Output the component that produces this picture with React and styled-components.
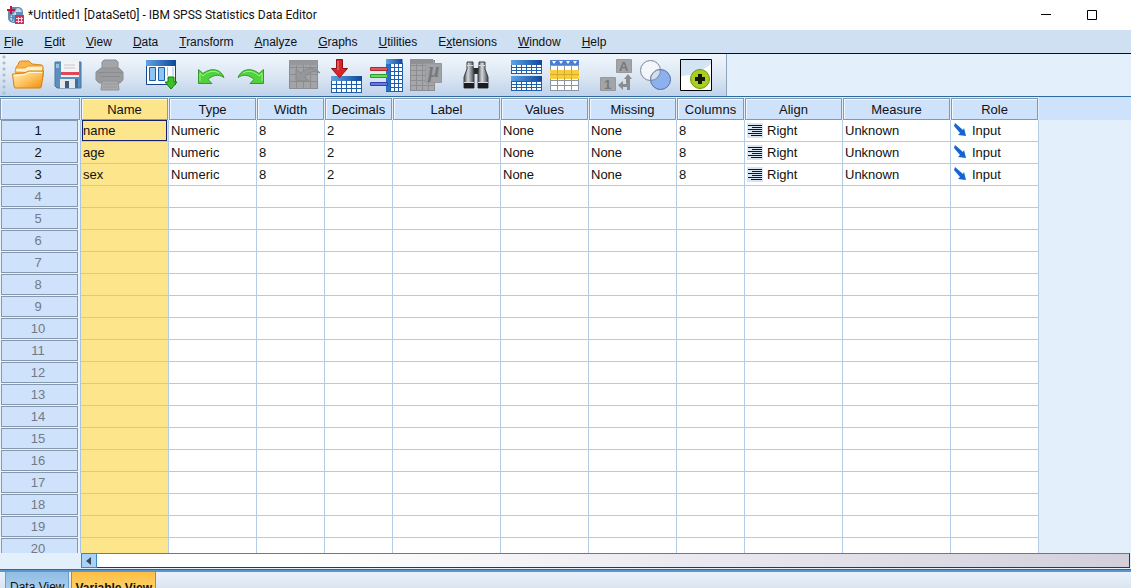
import React from 'react'
import styled, { createGlobalStyle } from 'styled-components'

const GlobalStyle = createGlobalStyle`
* {
    box-sizing: border-box;
}
body {
    margin: 0;
    overflow: hidden;
    background: #e3effb;
    color: #111;
    font-family: "Liberation Sans", Arial, sans-serif;
    font-size: 13px;
}
button {
    border: 0;
    padding: 0;
    background: none;
    font: inherit;
    color: inherit;
}
`

const Window = styled.div`
display: flex;
flex-direction: column;
height: 100vh;
`

const TitleBar = styled.header`
display: flex;
align-items: center;
height: 30px;
padding: 0 16px 0 7px;
background: #fff;
`

const Title = styled.h1`
flex: 1;
margin: 0 0 0 4px;
font-family: Roboto, "Noto Sans", sans-serif;
font-size: 12px;
font-weight: 400;
line-height: 30px;
`

const WindowButton = styled.button`
display: flex;
align-items: center;
justify-content: center;
width: 46px;
height: 28px;
`

const MenuBar = styled.nav`
display: flex;
gap: 21px;
height: 24px;
padding: 1px 0 0 4px;
background: #cee0f1;
border-bottom: 1px solid #0b0f14;
font-size: 12px;
line-height: 22px;
`

const MenuItem = styled.button`
white-space: nowrap;
`

const ToolStrip = styled.div`
display: flex;
height: 43px;
background: #e3effb;
border-bottom: 1px solid #2a6ca3;
`

const ToolBar = styled.div`
display: flex;
padding-right: 10px;
border-right: 1px solid #8fa3ba;
background: linear-gradient(#f1f6fc, #dde8f4 50%, #bfd3ea);
`

const Grip = styled.span`
width: 8px;
background: radial-gradient(circle at 4px 3px, #a9bdd2 1px, transparent 2px) 0 0 / 8px 6px;
`

const ToolGroup = styled.div`
display: flex;
margin-left: ${props => props.$space || 0}px;
`

const ToolButton = styled.button`
width: 40px;
height: 42px;

svg {
    display: block;
}
`

const Sheet = styled.main`
display: flex;
flex: 1;
min-height: 0;
overflow: hidden;
background: #e3effb;
`

const Table = styled.table`
flex: none;
width: 1039px;
height: max-content;
table-layout: fixed;
border-collapse: separate;
border-spacing: 0;
`

const HeadCell = styled.th`
height: 23px;
padding: 1px 1px 0 0;
border: 0;
background: #e3effb;
font-weight: 400;
line-height: 22px;

div {
    height: 22px;
    border: 1px solid #8698ae;
    background: ${props => props.$active ? '#fde58c' : '#cfe2fb'};
    box-shadow: inset 1px 1px #f3f8fe;
}
`

const RowHead = styled.th`
height: 22px;
padding: 0 2px 1px 1px;
border-right: 1px solid #a9c4e2;
background: #eaf3fc;
color: ${props => props.$filled ? '#111' : '#717a86'};
font-weight: 400;
line-height: 19px;

div {
    height: 21px;
    padding-right: 3px;
    border: 1px solid #8698ae;
    background: #cfe2fb;
}
`

const Cell = styled.td`
height: 22px;
padding: 0 0 0 1px;
border-right: 1px solid #b4cbe4;
border-bottom: 1px solid #b4cbe4;
background: ${props => props.$active ? '#fde58c' : '#fff'};
line-height: 19px;
white-space: nowrap;

div {
    display: flex;
    align-items: center;
    gap: 4px;
    height: 21px;
    padding-left: 1px;
    margin-right: 1px;
    outline: ${props => props.$selected ? '1px solid #16206b' : 'none'};
    outline-offset: -1px;
}
`

const Filler = styled.div`
flex: 1;

&::before {
    content: "";
    display: block;
    height: 23px;
    background: #cfe2fb;
}
`

const ScrollRow = styled.div`
display: flex;
height: 19px;
padding: 0 1px 0 81px;
background: #e3effb;
border-bottom: 2px solid #5d95cb;
box-shadow: inset 0 -1px #2a6ca3;
`

const ScrollButton = styled.button`
display: flex;
align-items: center;
justify-content: center;
width: 16px;
height: 15px;
border: 1px solid #3d87bd;
background: #a9d2f8;
`

const ScrollThumb = styled.div`
flex: 1;
height: 15px;
border: 1px solid #1c3d63;
border-top-color: #3d87bd;
border-left: 0;
background: linear-gradient(90deg, #fff 20%, #e9e7ef 60%, #d2cfda);
`

const TabBar = styled.footer`
display: flex;
align-items: flex-start;
gap: 2px;
height: 16px;
padding-left: 5px;
overflow: hidden;
background: linear-gradient(#e9f1fb, #dbe5f1);
font-size: 12px;
`

const Tab = styled.button`
height: 28px;
padding: ${props => props.$active ? '4px 3px 0' : '2px 4px 0'};
border: 1px solid ${props => props.$active ? '#b88a2c' : '#6f9cc4'};
border-top: 0;
background: ${props => props.$active ? 'linear-gradient(#fdbf45, #ffdc7c)' : 'linear-gradient(#8fbde3, #b9d8f2)'};
font-weight: ${props => props.$active ? 700 : 400};
`

// Every toolbar drawing shares the 40x42 button area
const Icon = ({ children }) => (
    <svg width="40" height="42" viewBox="0 0 40 42" aria-hidden="true">
        <defs>
            <linearGradient id="blueHead" x1="0" x2="1">
                <stop offset="0" stopColor="#5fa4e6" />
                <stop offset="1" stopColor="#0d479b" />
            </linearGradient>
        </defs>
        {children}
    </svg>
)

const Mesh = ({ x, y, cols, rows, w, h, fill = '#fff', stroke = '#1f5fae' }) => (
    <g stroke={stroke} shapeRendering="crispEdges">
        <rect x={x + 0.5} y={y + 0.5} width={cols * w} height={rows * h} fill={fill} />
        {Array.from({ length: cols - 1 }, (_, i) => (
            <path key={i} d={`M${x + 0.5 + (i + 1) * w} ${y}v${rows * h}`} />
        ))}
        {Array.from({ length: rows - 1 }, (_, i) => (
            <path key={i} d={`M${x} ${y + 0.5 + (i + 1) * h}h${cols * w}`} />
        ))}
    </g>
)

const OpenIcon = () => (
    <Icon>
        <defs>
            <linearGradient id="folder" x1="0" y1="0" x2="1" y2="1">
                <stop offset="0" stopColor="#fff3c8" />
                <stop offset="0.55" stopColor="#fdc057" />
                <stop offset="1" stopColor="#ef8a0a" />
            </linearGradient>
        </defs>
        <path d="M8 19V13l2-2 1-3q1-1 3-1h7l3 3 10 1q1 1 1 3v9H8z" fill="#fbb54a" stroke="#d9851c" />
        <path d="M7 18l1-4h9l3-2h15l-1 7z" fill="#fff0c9" stroke="#e79a2c" />
        <path d="M4.500 20l12-1 4-2h15l-2 15-1 2H7l-1-2z" fill="url(#folder)" stroke="#d9800f" />
        <path d="M6 21.500l11-1 4-2h13" fill="none" stroke="#fff7dc" />
    </Icon>
)

const SaveIcon = () => (
    <Icon>
        <path d="M7 8h26v26H9l-2-2z" fill="#5b8fbe" stroke="#4676a5" />
        <path d="M13 7h18v16H13z" fill="#f1f3f5" />
        <path d="M13 18h18v3H13z" fill="#e0455a" />
        <path d="M16 11h11M16 14h11" stroke="#c4c9cf" />
        <path d="M8 10h3v4H8z" fill="#9cc2e4" />
        <path d="M12 25h15v9H12z" fill="#e5e8ea" />
        <path d="M17 27h4v7h-4z" fill="#3d5c7a" />
        <path d="M27 25h3v9h-3z" fill="#3b6fa3" />
    </Icon>
)

const PrintIcon = () => (
    <Icon>
        <path d="M14 15V8l2-2h12l2 2v7z" fill="#a4a5a8" stroke="#8f9093" />
        <path d="M8 18l5-4h18l4 4v8l-3 3H11l-3-3z" fill="#9a9b9e" stroke="#8f9093" />
        <path d="M10 18.500h24M12 22.500h20" stroke="#8b8c8f" />
        <path d="M14 27h16l1 9H13z" fill="#a9aaad" stroke="#8f9093" />
        <path d="M15 30h14M15 33h14" stroke="#97989b" />
    </Icon>
)

const RecallIcon = () => (
    <Icon>
        <path d="M5.5 6.5h29v24h-29z" fill="#fff" stroke="#14468e" />
        <path d="M5 6h30v6H5z" fill="url(#blueHead)" />
        <path d="M8.500 13.500h6v13h-6zM17.500 13.500h6v13h-6z" fill="#8dc6f5" stroke="#1d5ca6" />
        <path d="M26.500 13v9M32 13v9" stroke="#8dc6f5" />
        <path d="M27 23h6v5h3l-6 7-6-7h3z" fill="#3bc322" stroke="#18790e" />
    </Icon>
)

const UndoShape = () => (
    <g>
        <path d="M7.500 15.500v14H21l-4-4c4-4 10-6 16-2C30 15 20 13 12 19.500z" fill="#4fd23a" stroke="#359a2c" strokeLinejoin="round" />
        <path d="M9 27v-8l3 3c5-5 11-6 16-3" fill="none" stroke="#a5f090" />
    </g>
)

const UndoIcon = () => <Icon><UndoShape /></Icon>

const RedoIcon = () => <Icon><g transform="matrix(-1 0 0 1 40 0)"><UndoShape /></g></Icon>

const GoToDataIcon = () => (
    <Icon>
        <Mesh x={3} y={6} cols={4} rows={4} w={7} h={7} fill="#a3a4a6" stroke="#8c8d90" />
        <path d="M3 6h29v5H3z" fill="#96979a" />
        <path d="M10 15v12h13l-4-4c3-5 9-7 15-4-4-6-14-6-19 0z" fill="#96979a" stroke="#88898c" />
    </Icon>
)

const GoToCaseIcon = () => (
    <Icon>
        <Mesh x={5} y={26} cols={6} rows={3} w={5} h={4} />
        <path d="M5 22h31v5H5z" fill="url(#blueHead)" />
        <path d="M10.500 5.500h6v9h5l-8 9-8-9h5z" fill="#d7262b" stroke="#8e1013" />
        <path d="M12 7v9" stroke="#f38a8a" />
    </Icon>
)

const GoToVariableIcon = () => (
    <Icon>
        <Mesh x={20} y={9} cols={4} rows={7} w={4} h={4} />
        <path d="M20 5h16.500v5H20z" fill="url(#blueHead)" />
        <path d="M20 10h4v27h-4z" fill="#2c70c2" />
        <path d="M4.500 13.500h17v3h-17z" fill="#e2555c" stroke="#b3272f" />
        <path d="M4.500 20.500h17v3h-17z" fill="#63dd55" stroke="#2c9c27" />
        <path d="M4.500 28.500h17v3h-17z" fill="#6478e6" stroke="#2f41b5" />
    </Icon>
)

const VariablesIcon = () => (
    <Icon>
        <Mesh x={4} y={6} cols={4} rows={6} w={6} h={5} fill="#a6a7a9" stroke="#8c8d90" />
        <path d="M4 5h23v5H4z" fill="#8f9093" />
        <path d="M19.500 9.500h16v19h-16z" fill="#a1a2a5" stroke="#97989b" />
        <text x="22" y="23" fontFamily="Liberation Serif, serif" fontSize="20" fontStyle="italic" fontWeight="700" fill="#77787b">µ</text>
    </Icon>
)

const FindIcon = () => (
    <Icon>
        <defs>
            <linearGradient id="barrel" x1="0" x2="1">
                <stop offset="0" stopColor="#4d5056" />
                <stop offset="0.4" stopColor="#d5d8dc" />
                <stop offset="1" stopColor="#44474c" />
            </linearGradient>
        </defs>
        <path d="M17 14h6v6h-6z" fill="#26282c" />
        <path d="M11 8h6v4l1 6v16H8V23l3-8z" fill="url(#barrel)" stroke="#3c3e43" />
        <path d="M23 8h6v7l3 8v11H22V18l1-6z" fill="url(#barrel)" stroke="#3c3e43" />
        <path d="M8 29h10v5H8zM22 29h10v5H22z" fill="#1b1c1f" />
        <path d="M8 28.500h10M22 28.500h10M11 11.500h6M23 11.500h6" stroke="#d6d9dc" />
    </Icon>
)

const SplitIcon = () => (
    <Icon>
        <Mesh x={5} y={10} cols={6} rows={3} w={5} h={3} />
        <path d="M5 6h31v5H5z" fill="url(#blueHead)" />
        <Mesh x={5} y={27} cols={6} rows={3} w={5} h={3} />
        <path d="M5 22h31v5H5z" fill="url(#blueHead)" />
    </Icon>
)

const SelectIcon = () => (
    <Icon>
        <Mesh x={4} y={6} cols={4} rows={6} w={7} h={5} stroke="#8b96a8" />
        <path d="M4 6h29v5H4z" fill="#4c7fd0" />
        <path d="M6 7h4l-2 3zM13 7h4l-2 3zM20 7h4l-2 3zM27 7h4l-2 3z" fill="#fff" />
        <path d="M4 16h29v9H4z" fill="#f6cd3f" />
        <path d="M4 20.500h29M11.500 16v9M18.500 16v9M25.500 16v9" stroke="#d8a928" />
    </Icon>
)

const LabelsIcon = () => (
    <Icon>
        <g fill="#a3a4a7" stroke="#97989b">
            <path d="M20.500 5.500h15v13h-15zM4.500 23.500h15v13h-15z" />
        </g>
        <g fontFamily="Liberation Sans, sans-serif" fontWeight="700" fontSize="13" fill="#77787b">
            <text x="23" y="17">A</text>
            <text x="8" y="35">1</text>
        </g>
        <path d="M30 25h-2l4-5 4 5h-2v11h-3v-3h-4v3l-5-5 5-4v3h3z" fill="#8b8c8f" />
    </Icon>
)

const SetsIcon = () => (
    <Icon>
        <circle cx="14.500" cy="16.500" r="10" fill="#f3f6fb" stroke="#7c8594" />
        <circle cx="24.500" cy="25.500" r="10" fill="#8db1ee" stroke="#4d6ea6" />
        <path d="M14.600 26.500a10 10 0 0 1 9.800-11a10 10 0 0 1-9.800 11z" fill="#d3deee" stroke="#7184a0" />
    </Icon>
)

const AddIcon = () => (
    <Icon>
        <path d="M4.500 5.500h31v31h-31z" fill="#fff" stroke="#000" />
        <path d="M5 6h30v4Q20 22 5 22z" fill="#d3e4f2" />
        <circle cx="24" cy="25" r="9.500" fill="#a9cf1f" stroke="#6d9410" />
        <path d="M22 20h4v3h3v4h-3v3h-4v-3h-3v-4h3z" fill="#16190c" />
    </Icon>
)

const AppLogo = () => (
    <svg width="17" height="18" viewBox="0 0 17 18" aria-hidden="true">
        <path d="M5 1h7q4 1 4 5v6q-1 4-5 5H6q-5-1-5-5V5z" fill="#5f8fb8" />
        <path d="M5 9h4v-3h6q-1-4-5-4L8 6 3 11q0 4 4 5z" fill="#c3d9e9" />
        <path d="M3 11.500h6M5.500 9v6" stroke="#5f8fb8" />
        <path d="M3 0h2v3h3v2H5v3H3V5H0V3h3z" fill="#c3163f" />
        <path d="M8 9h9v9H8z" fill="#d12f55" />
        <path d="M9 12.500h7M9 15.500h7M11.500 11v6M14.500 11v6" stroke="#f7d5dd" />
    </svg>
)

const AlignIcon = () => (
    <svg width="16" height="15" viewBox="0 0 16 15" aria-hidden="true">
        <path d="M0 0h16v15H0z" fill="#d9e6f2" />
        <path d="M1 2.500h14M5 4.500h10M1 6.500h14M5 8.500h10M1 10.500h14M4 12.500h11" stroke="#10151c" />
    </svg>
)

const InputIcon = () => (
    <svg width="15" height="17" viewBox="0 0 15 17" aria-hidden="true">
        <path d="M2 1l8 7 1-2 2 8-8-1 2-2-6-7z" fill="#1763cf" />
    </svg>
)

const menus = [
    ['', 'F', 'ile'], ['', 'E', 'dit'], ['', 'V', 'iew'], ['', 'D', 'ata'],
    ['', 'T', 'ransform'], ['', 'A', 'nalyze'], ['', 'G', 'raphs'], ['', 'U', 'tilities'],
    ['E', 'x', 'tensions'], ['', 'W', 'indow'], ['', 'H', 'elp'],
]

const tools = [
    { space: 0, items: [['Open', OpenIcon], ['Save', SaveIcon], ['Print', PrintIcon]] },
    { space: 13, items: [['Recall dialogs', RecallIcon]] },
    { space: 10, items: [['Undo', UndoIcon], ['Redo', RedoIcon]] },
    { space: 15, items: [['Go to data', GoToDataIcon], ['Go to case', GoToCaseIcon], ['Go to variable', GoToVariableIcon], ['Variables', VariablesIcon]] },
    { space: 10, items: [['Find', FindIcon]] },
    { space: 10, items: [['Split file', SplitIcon], ['Select cases', SelectIcon]] },
    { space: 10, items: [['Value labels', LabelsIcon], ['Use variable sets', SetsIcon], ['Customize toolbar', AddIcon]] },
]

const columns = [
    ['Name', 88], ['Type', 88], ['Width', 68], ['Decimals', 68], ['Label', 108], ['Values', 88],
    ['Missing', 88], ['Columns', 68], ['Align', 98], ['Measure', 108], ['Role', 88],
]

const variables = ['name', 'age', 'sex'].map(name => (
    [name, 'Numeric', '8', '2', '', 'None', 'None', '8', 'Right', 'Unknown', 'Input']
))

const rows = Array.from({ length: 20 }, (_, i) => variables[i] || [])

const App = () => {
    return (
        <Window>
            <GlobalStyle />
            <TitleBar>
                <AppLogo />
                <Title>*Untitled1 [DataSet0] - IBM SPSS Statistics Data Editor</Title>
                <WindowButton aria-label="Minimize">
                    <svg width="10" height="10"><path d="M0 4.500h10" stroke="#000" /></svg>
                </WindowButton>
                <WindowButton aria-label="Maximize">
                    <svg width="11" height="11"><path d="M.5.5h9v9h-9z" fill="none" stroke="#000" /></svg>
                </WindowButton>
            </TitleBar>
            <MenuBar>
                {menus.map(([before, key, after]) => (
                    <MenuItem key={after}>{before}<u>{key}</u>{after}</MenuItem>
                ))}
            </MenuBar>
            <ToolStrip>
                <ToolBar>
                    <Grip />
                    {tools.map((group, i) => (
                        <ToolGroup key={i} $space={group.space}>
                            {group.items.map(([label, Drawing]) => (
                                <ToolButton key={label} aria-label={label}><Drawing /></ToolButton>
                            ))}
                        </ToolGroup>
                    ))}
                </ToolBar>
            </ToolStrip>
            <Sheet>
                <Table>
                    <colgroup>
                        <col style={{ width: 81 }} />
                        {columns.map(([name, width]) => <col key={name} style={{ width }} />)}
                    </colgroup>
                    <thead>
                        <tr>
                            <HeadCell><div /></HeadCell>
                            {columns.map(([name], i) => (
                                <HeadCell key={name} scope="col" $active={i === 0}><div>{name}</div></HeadCell>
                            ))}
                        </tr>
                    </thead>
                    <tbody>
                        {rows.map((row, r) => (
                            <tr key={r}>
                                <RowHead scope="row" $filled={row.length > 0}><div>{r + 1}</div></RowHead>
                                {columns.map(([name], c) => (
                                    <Cell key={name} $active={c === 0} $selected={r === 0 && c === 0}>
                                        <div>
                                            {row[c] && name === 'Align' && <AlignIcon />}
                                            {row[c] && name === 'Role' && <InputIcon />}
                                            {row[c]}
                                        </div>
                                    </Cell>
                                ))}
                            </tr>
                        ))}
                    </tbody>
                </Table>
                <Filler />
            </Sheet>
            <ScrollRow>
                <ScrollButton aria-label="Scroll left">
                    <svg width="6" height="8"><path d="M5 0v8L0 4z" fill="#3a4a5c" /></svg>
                </ScrollButton>
                <ScrollThumb />
            </ScrollRow>
            <TabBar>
                <Tab>Data View</Tab>
                <Tab $active>Variable View</Tab>
            </TabBar>
        </Window>
    )
}

export default App
